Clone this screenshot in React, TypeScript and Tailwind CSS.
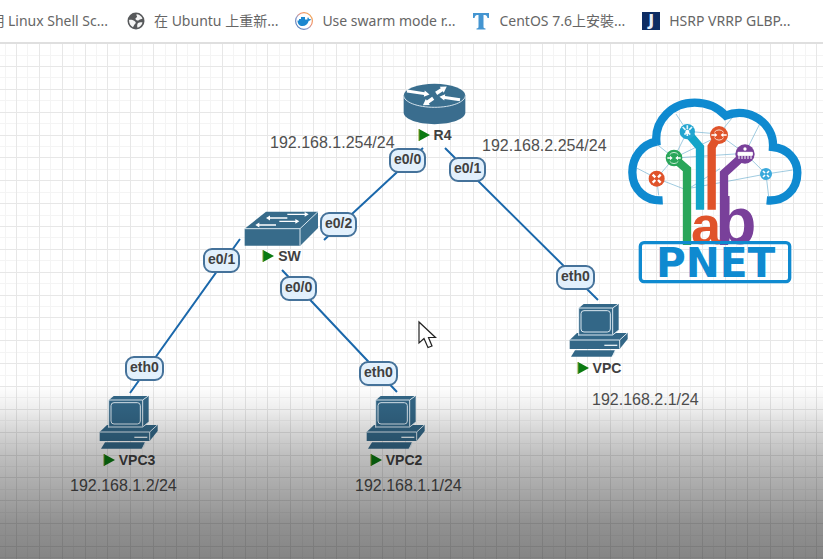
import type { ReactNode } from "react";

type Point = [number, number];

function Arrow({ from, to, body, head }: { from: Point; to: Point; body: number; head: number }) {
  const dx = to[0] - from[0];
  const dy = to[1] - from[1];
  const length = Math.hypot(dx, dy);
  const ux = dx / length;
  const uy = dy / length;
  const neck: Point = [to[0] - ux * head, to[1] - uy * head];
  const side = (p: Point, d: number) => `${p[0] - uy * d},${p[1] + ux * d}`;
  const half = body / 2;
  const wing = head * 0.6;
  return (
    <polygon
      fill="#fff"
      points={[
        side(from, half),
        side(neck, half),
        side(neck, wing),
        side(to, 0),
        side(neck, -wing),
        side(neck, -half),
        side(from, -half),
      ].join(" ")}
    />
  );
}

function RouterIcon() {
  return (
    <svg width="63" height="42" viewBox="0 0 190 126" aria-hidden="true">
      <path d="M2 37V89C2 108 43 124 95 124S188 108 188 89V37Z" fill="#3a6d8e" />
      <ellipse cx="95" cy="37" rx="93" ry="35" fill="#3a6f8f" />
      <path d="M2 37C2 57 43 73 95 73S188 57 188 37" fill="none" stroke="#d5e3ec" strokeWidth="3" />
      <Arrow from={[12, 24]} to={[80, 34]} body={9} head={16} />
      <Arrow from={[100, 31]} to={[132, 10]} body={11} head={18} />
      <Arrow from={[172, 50]} to={[110, 41]} body={9} head={16} />
      <Arrow from={[91, 46]} to={[60, 67]} body={11} head={18} />
    </svg>
  );
}

function SwitchIcon() {
  return (
    <svg width="75" height="35" viewBox="0 0 225 105" aria-hidden="true">
      <path d="M2 53 66 2H222V50L168 104H2Z" fill="#376b8a" />
      <path d="M168 53 222 2V50L168 104Z" fill="#3c708f" />
      <path d="M2 53H168M168 104V53L222 2" fill="none" stroke="#dbe9f1" strokeWidth="3" />
      <Arrow from={[130, 10]} to={[194, 10]} body={4} head={12} />
      <Arrow from={[130, 21]} to={[66, 21]} body={4} head={12} />
      <Arrow from={[106, 31]} to={[166, 31]} body={4} head={12} />
      <Arrow from={[96, 42]} to={[34, 42]} body={4} head={12} />
    </svg>
  );
}

function ComputerIcon() {
  return (
    <svg width="60" height="55" viewBox="0 0 180 165" aria-hidden="true">
      <path d="M30 15 44 3H149V80L131 96H30Z" fill="#336787" />
      <path d="M2 111 24 90H176V108L152 138H2Z" fill="#336787" />
      <path d="M18 142H138L128 161H6Z" fill="#336787" />
      <path d="M138 142 134 156 128 161" fill="none" stroke="#cfe0ea" strokeWidth="2" />
      <path
        d="M29 97V15H131L148 3M131 15V95M27 96H131L149 82M2 111H152L176 89M152 111V137"
        fill="none"
        stroke="#dce9f1"
        strokeWidth="3"
      />
      <rect x="36" y="23" width="88" height="64" rx="9" fill="#336787" stroke="#dce9f1" strokeWidth="3" />
      <path d="M106 127H145" stroke="#e6f0f5" strokeWidth="4" />
    </svg>
  );
}

function Device({ place, name, icon }: { place: string; name: string; icon: ReactNode }) {
  return (
    <div className={`absolute flex flex-col items-center ${place}`}>
      {icon}
      <div className="flex items-center gap-1 text-sm font-bold leading-5 text-[#404040]">
        <svg width="12" height="12" viewBox="0 0 12 12" aria-hidden="true">
          <path d="M1 0 12 6 1 12Z" fill="#0a7a12" />
          <path d="M1 0V12" stroke="#7d9a20" />
        </svg>
        <span>{name}</span>
      </div>
    </div>
  );
}

function Port({ place, name }: { place: string; name: string }) {
  return (
    <span
      className={`absolute h-[25px] rounded-[9px] border-2 border-[#45729a] bg-[#e2f0fc] px-[3px] text-sm font-bold leading-[19px] text-[#404040] ${place}`}
    >
      {name}
    </span>
  );
}

function Address({ place, value }: { place: string; value: string }) {
  return <span className={`absolute text-base leading-5 text-[#505050] ${place}`}>{value}</span>;
}

const gridMajor = [0, 23, 46, 69, 91, 114, 137];
const gridMinor = [11, 34, 57, 80, 103, 126, 149];

function Grid() {
  return (
    <svg className="absolute inset-0 h-full w-full" aria-hidden="true">
      <defs>
        <pattern id="grid" x="16" y="22" width="160" height="160" patternUnits="userSpaceOnUse">
          {gridMinor.map((n) => (
            <path key={n} d={`M${n} 0h1v160h-1zM0 ${n}h160v1h-160z`} fill="#f4f4f4" />
          ))}
          {gridMajor.map((n) => (
            <path key={n} d={`M${n} 0h1v160h-1zM0 ${n}h160v1h-160z`} fill="#e7e7e7" />
          ))}
        </pattern>
      </defs>
      <rect width="100%" height="100%" fill="url(#grid)" />
    </svg>
  );
}

function Links() {
  return (
    <svg className="absolute inset-0 h-full w-full" aria-hidden="true">
      <path
        d="M423 104 324 196M445 104 598 256M240 195 130 349M282 226 397 348"
        fill="none"
        stroke="#1b68ab"
        strokeWidth="2"
      />
    </svg>
  );
}

function LabLogo() {
  return (
    <svg
      className="absolute left-[620px] top-[46px]"
      width="190"
      height="200"
      viewBox="0 0 570 600"
      role="img"
      aria-label="PNET lab"
    >
      <path
        d="M128 331C78 334 37 300 37 247C37 199 68 163 109 155C104 91 156 38 224 38C263 38 295 54 317 77C386 49 463 99 459 171C502 176 532 207 532 248C532 301 492 336 440 331"
        fill="none"
        stroke="#0f8ad0"
        strokeWidth="25"
        strokeLinejoin="miter"
      />
      <g stroke="#6fb0d0" strokeWidth="2" fill="none">
        <path d="M168 72 202 124 297 132 336 84M297 134 375 190 418 104M375 190 438 252 518 240M438 252 446 320M112 164 162 204 375 190M162 204 297 138M110 265 50 234M110 265 116 316M110 265 162 204M110 265 200 300 300 236M438 252 322 274 214 294M202 124 162 204" />
      </g>
      <g fill="none" strokeWidth="25" strokeLinejoin="miter">
        <path d="M170 211 201 238V465" stroke="#2aa65a" />
        <path d="M206 132 240 172V359" stroke="#12a4c8" />
        <path d="M294 140 275 170V359" stroke="#e0532a" />
        <path d="M366 201 312 250V465" stroke="#79409a" />
      </g>
      <text x="213" y="462" fontSize="162" fontWeight="700" fontFamily="Liberation Sans, sans-serif" fill="#e0532a">
        a
      </text>
      <text x="287" y="463" fontSize="200" fontWeight="700" fontFamily="Liberation Sans, sans-serif" fill="#79409a">
        b
      </text>
      <circle cx="202" cy="125" r="23" fill="#22a5d0" />
      <path d="M188 111 216 139M216 111 188 139M202 106V144" stroke="#e4f6fb" strokeWidth="5" strokeDasharray="12 8" />
      <circle cx="202" cy="125" r="6" fill="#fff" />
      <circle cx="297" cy="135" r="27" fill="#e0532a" />
      <path d="M283 127A17 17 0 0 1 311 127M283 143A17 17 0 0 0 311 143" fill="none" stroke="#fbd9cd" strokeWidth="3" />
      <path d="M274 135H288M320 135H306" fill="none" stroke="#fff" strokeWidth="4" />
      <path d="M284 128 292 135 284 142ZM310 128 302 135 310 142Z" fill="#fff" />
      <circle cx="162" cy="204" r="25" fill="#2aa65a" />
      <path d="M149 194A16 16 0 0 1 175 194M149 214A16 16 0 0 0 175 214" fill="none" stroke="#c8ecd4" strokeWidth="3" />
      <path d="M142 204H153M182 204H171" fill="none" stroke="#fff" strokeWidth="4" />
      <path d="M150 197 158 204 150 211ZM174 197 166 204 174 211Z" fill="#fff" />
      <circle cx="375" cy="192" r="29" fill="#79409a" />
      <path d="M354 187H397V196H354ZM357 197V207M366 197V207M375 197V207M384 197V207M393 197V207" fill="#fff" stroke="#fff" strokeWidth="3" />
      <circle cx="375" cy="177" r="5" fill="#fff" />
      <circle cx="110" cy="266" r="24" fill="#e0532a" />
      <path d="M98 254 106 262M122 254 114 262M98 278 106 270M122 278 114 270" stroke="#fff" strokeWidth="7" />
      <circle cx="438" cy="252" r="18" fill="#3aa9dc" />
      <path d="M429 243 435 249M447 243 441 249M429 261 435 255M447 261 441 255" stroke="#fff" strokeWidth="5" />
      <rect x="61" y="458" width="448" height="117" rx="11" fill="none" stroke="#0f8ad0" strokeWidth="10" />
      <text
        x="287"
        y="561"
        textAnchor="middle"
        fontSize="122"
        fontWeight="700"
        fontFamily="DejaVu Sans, sans-serif"
        fill="#0f8ad0"
      >
        PNET
      </text>
    </svg>
  );
}

function Pointer() {
  return (
    <svg className="absolute left-[418px] top-[276px]" width="20" height="30" viewBox="0 0 20 30" aria-hidden="true">
      <path d="M1 2V23L6 18.500 10 27.500 14 26 10.500 17.500H17.500Z" fill="#fff" stroke="#222" strokeWidth="1.200" />
    </svg>
  );
}

function GlobeIcon() {
  return (
    <svg width="18" height="18" viewBox="0 0 18 18" aria-hidden="true">
      <circle cx="9" cy="9" r="8.500" fill="#57595b" />
      <path
        d="M2 8C3.500 7.500 6 8 7.500 9C9 9.800 9.200 11 8 12C7 13 6.500 14.500 6 15.300C3.500 14 2 11.500 2 8ZM9.500 2.200C12 2.200 14.500 4 15.500 6.500C14.500 7.500 13 7 12 8C11 9 9.500 8.500 8.500 7.200C8 6 9.500 6 10 5C10.300 4 9 3.500 9.500 2.200ZM11 11C12.500 10 14.500 10.200 15.500 10.500C15 13 13 15.200 10.500 15.700C10 14.500 10 12 11 11Z"
        fill="#f5f5f5"
      />
    </svg>
  );
}

function WhaleIcon() {
  return (
    <svg width="18" height="18" viewBox="0 0 18 18" aria-hidden="true">
      <defs>
        <linearGradient id="ring" x1="1" y1="0" x2="0" y2="1">
          <stop offset="0" stopColor="#f2b14c" />
          <stop offset="0.400" stopColor="#ef8d70" />
          <stop offset="0.600" stopColor="#8d9bcb" />
          <stop offset="1" stopColor="#3d6fae" />
        </linearGradient>
      </defs>
      <circle cx="9" cy="9" r="8.400" fill="#fff" stroke="url(#ring)" strokeWidth="1.200" />
      <path
        d="M2.500 8.500H4V7H6V5H10V7.500H12.500C12.200 6.500 12.500 5.800 13 5.200C13.800 5.800 14 6.500 14 7.200C14.800 7 15.500 7.200 16 7.500C15.500 8.500 14.700 8.800 13.800 8.800C12.500 12.500 10.500 14 7.500 14C4.500 14 2.500 12 2.500 8.500Z"
        fill="#1b87cf"
      />
    </svg>
  );
}

function SerifTIcon() {
  return (
    <svg width="18" height="18" viewBox="0 0 18 18" aria-hidden="true">
      <path d="M1 1H17V6H15.500C15 3.500 14 3 11.500 3V14.500C11.500 16 12 16.200 13.500 16.500V17.500H4.500V16.500C6 16.200 6.500 16 6.500 14.500V3C4 3 3 3.500 2.500 6H1Z" fill="#4495d1" />
    </svg>
  );
}

function JournalIcon() {
  return (
    <span className="flex size-[18px] items-center justify-center bg-[#0d2c63] font-['DejaVu_Sans'] text-base font-bold leading-none text-[#e9eef8]">
      J
    </span>
  );
}

const bookmarks: { title: string; icon: ReactNode }[] = [
  { title: "在 Ubuntu 上重新...", icon: <GlobeIcon /> },
  { title: "Use swarm mode r...", icon: <WhaleIcon /> },
  { title: "CentOS 7.6上安裝...", icon: <SerifTIcon /> },
  { title: "HSRP VRRP GLBP...", icon: <JournalIcon /> },
];

export default function App() {
  return (
    <div className="flex min-h-screen flex-col overflow-hidden bg-white font-['Liberation_Sans',Arial,sans-serif]">
      <nav className="flex h-11 items-center gap-[17px] overflow-hidden whitespace-nowrap border-b-2 border-[#dfdfdf] font-['Noto_Sans','Noto_Sans_CJK_TC',sans-serif] text-sm text-[#666]">
        <a href="#shell" className="flex w-[110px] shrink-0 justify-end pr-0.5">
          明 Linux Shell Sc...
        </a>
        {bookmarks.map((b) => (
          <a key={b.title} href="#bookmark" className="flex shrink-0 items-center gap-[9px]">
            {b.icon}
            {b.title}
          </a>
        ))}
      </nav>
      <main className="relative flex-1 overflow-hidden">
        <Grid />
        <Links />
        <Address place="left-[270px] top-[89px]" value="192.168.1.254/24" />
        <Address place="left-[482px] top-[92px]" value="192.168.2.254/24" />
        <Address place="left-[592px] top-[346px]" value="192.168.2.1/24" />
        <Address place="left-[355px] top-[432px]" value="192.168.1.1/24" />
        <Address place="left-[70px] top-[432px]" value="192.168.1.2/24" />
        <Device place="left-[403px] top-[39px]" name="R4" icon={<RouterIcon />} />
        <Device place="left-[244px] top-[167px]" name="SW" icon={<SwitchIcon />} />
        <Device place="left-[569px] top-[259px]" name="VPC" icon={<ComputerIcon />} />
        <Device place="left-[366px] top-[351px]" name="VPC2" icon={<ComputerIcon />} />
        <Device place="left-[99px] top-[351px]" name="VPC3" icon={<ComputerIcon />} />
        <Port place="left-[389px] top-[104px]" name="e0/0" />
        <Port place="left-[449px] top-[113px]" name="e0/1" />
        <Port place="left-[320px] top-[168px]" name="e0/2" />
        <Port place="left-[203px] top-[204px]" name="e0/1" />
        <Port place="left-[280px] top-[232px]" name="e0/0" />
        <Port place="left-[125px] top-[312px]" name="eth0" />
        <Port place="left-[359px] top-[317px]" name="eth0" />
        <Port place="left-[556px] top-[221px]" name="eth0" />
        <LabLogo />
        <Pointer />
        <div className="pointer-events-none absolute inset-x-0 bottom-0 h-[174px] bg-[linear-gradient(to_bottom,transparent,rgba(0,0,0,0.07)_14%,rgba(0,0,0,0.17)_27%,rgba(0,0,0,0.25)_40%,rgba(0,0,0,0.31)_53%,rgba(0,0,0,0.37)_66%,rgba(0,0,0,0.43)_79%,rgba(0,0,0,0.48))]" />
      </main>
    </div>
  );
}
